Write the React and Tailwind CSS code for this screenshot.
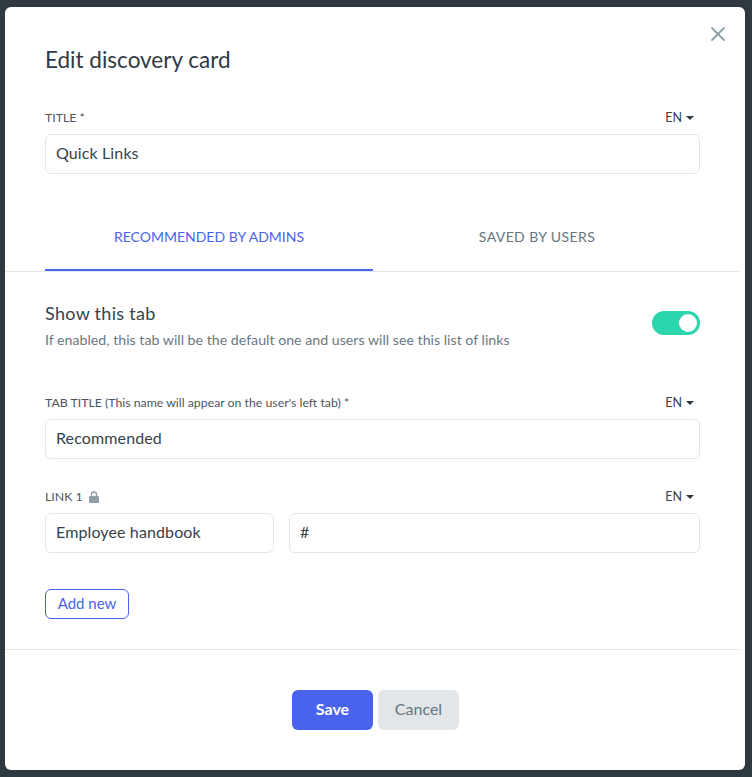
import { X } from "lucide-react";

const FONT = "font-['Lato','Noto_Sans',sans-serif]";

function LangPicker() {
  return (
    <span className="flex items-center gap-[4px] pr-[6px] text-[12.5px] leading-[16px] text-[#37424a]">
      EN
      <span className="h-0 w-0 border-x-[4px] border-t-[4px] border-x-transparent border-t-[#2f3a40]" />
    </span>
  );
}

function LabelRow({ children }) {
  return (
    <div className="flex h-[16px] items-center justify-between">
      <span className="flex items-center text-[12.3px] leading-[16px] text-[#4a5560]">{children}</span>
      <LangPicker />
    </div>
  );
}

function Field({ value, className = "" }) {
  return (
    <div className={`flex h-[40px] items-center rounded-[6px] border border-[#e3e7e9] bg-white px-[10px] pb-[2px] text-[16px] tracking-[0.12px] text-[#36424c] ${className}`}>
      {value}
    </div>
  );
}

export default function App() {
  return (
    <div className={`h-[777px] w-[752px] bg-[#2f3a40] pl-[5px] pt-[7px] ${FONT}`}>
      <div className="relative h-[763px] w-[740px] rounded-[6px] bg-white">
        <button className="absolute right-[15px] top-[15px] text-[#8fa0a9]">
          <X size={24} strokeWidth={1.8} />
        </button>

        <div className="pl-[40px] pr-[45px] pt-[39px]">
          <h2 className="text-[22.5px] leading-[28px] text-[#2f3a44]">Edit discovery card</h2>
          <div className="mt-[36px]">
            <LabelRow>TITLE *</LabelRow>
          </div>
          <Field value="Quick Links" className="mt-[8px]" />
        </div>

        <div className="mt-[43px] mr-[5px] border-b border-[#e3e7e9] pl-[40px]">
          <div className="flex w-[656px] text-[14px]">
            <div className="flex h-[54px] w-[328px] items-start justify-center border-b-2 border-[#4a63ee] pt-[9px] text-[#4a63ee]">
              RECOMMENDED BY ADMINS
            </div>
            <div className="flex h-[54px] w-[328px] items-start justify-center pt-[9px] tracking-[0.4px] text-[#66747f]">
              SAVED BY USERS
            </div>
          </div>
        </div>

        <div className="pl-[40px] pr-[45px]">
          <div className="mt-[29px] flex h-[49px] items-start justify-between">
            <div>
              <div className="text-[18px] leading-[24px] tracking-[0.3px] text-[#36424c]">Show this tab</div>
              <div className="mt-[5px] text-[14.2px] leading-[20px] text-[#6b7883]">
                If enabled, this tab will be the default one and users will see this list of links
              </div>
            </div>
            <div className="mt-[10px] flex h-[24px] w-[48px] items-center justify-end rounded-full bg-[#2bd6ac] pr-[3px]">
              <span className="h-[18px] w-[18px] rounded-full bg-white" />
            </div>
          </div>

          <div className="mt-[45px]">
            <LabelRow>TAB TITLE (This name will appear on the user's left tab) *</LabelRow>
          </div>
          <Field value="Recommended" className="mt-[8px]" />

          <div className="mt-[30px]">
            <LabelRow>
              LINK 1
              <svg width="10" height="12" viewBox="0 0 10 12" className="ml-[6px] text-[#8fa0a9]">
                <path d="M2.5 5V3.5a2.5 2.5 0 0 1 5 0V5" fill="none" stroke="currentColor" strokeWidth="1.3" />
                <rect x="0" y="5" width="10" height="7" rx="1" fill="currentColor" />
              </svg>
            </LabelRow>
          </div>
          <div className="mt-[8px] flex gap-[15px]">
            <Field value="Employee handbook" className="w-[229px]" />
            <Field value="#" className="flex-1" />
          </div>

          <button className="mt-[36px] block h-[30px] w-[84px] rounded-[6px] border border-[#4a63ee] pb-[2px] text-[15px] text-[#4a63ee]">
            Add new
          </button>
        </div>

        <div className="mt-[30px] mr-[5px] border-t border-[#e3e7e9]" />

        <div className="mt-[40px] flex justify-center gap-[5px] pl-[1px]">
          <button className="h-[40px] w-[81px] rounded-[6px] bg-[#4a63ee] pb-[2px] text-[16px] font-bold text-white">Save</button>
          <button className="h-[40px] w-[81px] rounded-[6px] bg-[#e2e6e8] pb-[2px] text-[16px] text-[#66747f]">Cancel</button>
        </div>
      </div>
    </div>
  );
}
